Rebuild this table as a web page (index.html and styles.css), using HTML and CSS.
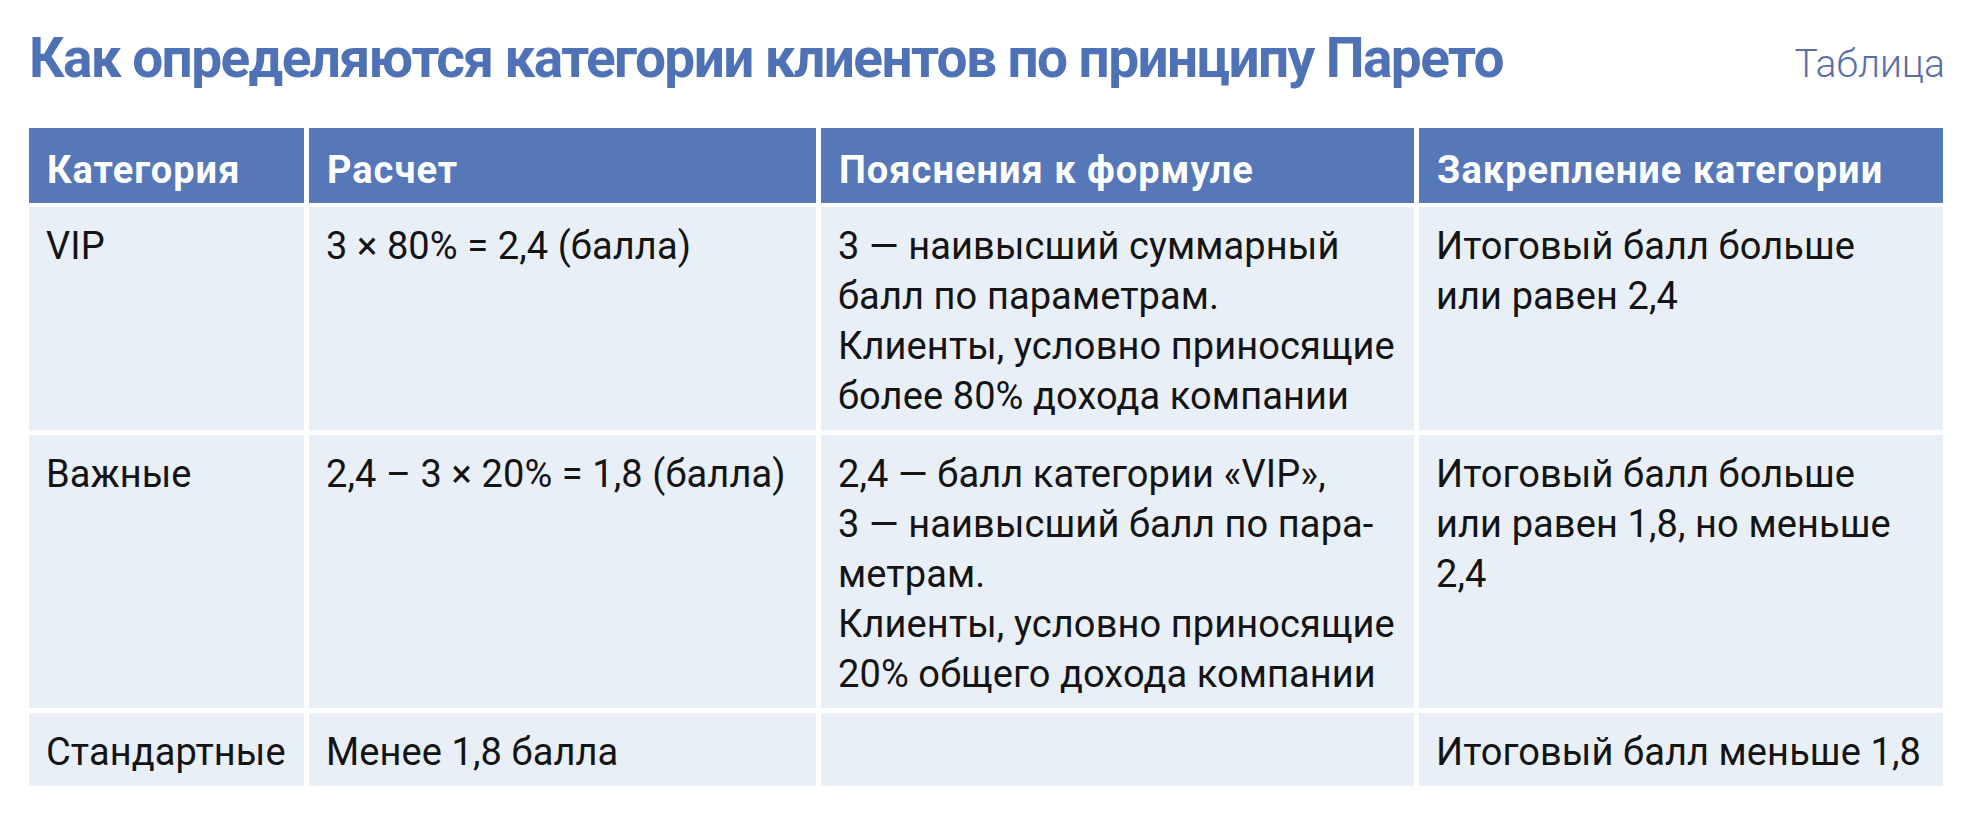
FILE: index.html
```html
<!DOCTYPE html>
<html lang="ru">
<head>
<meta charset="utf-8">
<title>Категории клиентов по принципу Парето</title>
<link rel="stylesheet" href="styles.css">
</head>
<body>
<div class="page">
  <header class="top">
    <h1 class="title">Как определяются категории клиентов по принципу Парето</h1>
    <span class="label">Таблица</span>
  </header>
  <div class="grid">
    <div class="th">Категория</div>
    <div class="th">Расчет</div>
    <div class="th">Пояснения к формуле</div>
    <div class="th">Закрепление категории</div>

    <div class="td">VIP</div>
    <div class="td">3 × 80% = 2,4 (балла)</div>
    <div class="td">3 — наивысший суммарный<br>балл по параметрам.<br>Клиенты, условно приносящие<br>более 80% дохода компании</div>
    <div class="td">Итоговый балл больше<br>или равен 2,4</div>

    <div class="td">Важные</div>
    <div class="td">2,4 – 3 × 20% = 1,8 (балла)</div>
    <div class="td">2,4 — балл категории «VIP»,<br>3 — наивысший балл по пара-<br>метрам.<br>Клиенты, условно приносящие<br>20% общего дохода компании</div>
    <div class="td">Итоговый балл больше<br>или равен 1,8, но меньше<br>2,4</div>

    <div class="td">Стандартные</div>
    <div class="td">Менее 1,8 балла</div>
    <div class="td"></div>
    <div class="td">Итоговый балл меньше 1,8</div>
  </div>
</div>
</body>
</html>
```
FILE: styles.css
```css
html, body {
  margin: 0;
  padding: 0;
  background: #ffffff;
}

.page {
  width: 1914px;
  padding: 0 0 0 29px;
  font-family: Roboto, "Noto Sans", "DejaVu Sans", sans-serif;
}

.top {
  display: flex;
  justify-content: space-between;
  align-items: baseline;
  padding-top: 26px;
  margin-bottom: 38px;
}

.title {
  margin: 0;
  font-size: 55px;
  line-height: 64px;
  font-weight: 700;
  letter-spacing: -1.6px;
  color: #4f72b6;
}

.label {
  font-size: 39px;
  font-weight: 300;
  color: #5a6ea6;
  margin-right: -2px;
}

.grid {
  display: grid;
  grid-template-columns: 275px 507px 593px 524px;
  column-gap: 5px;
  row-gap: 5px;
}

.th {
  background: #5677b8;
  color: #ffffff;
  font-weight: 700;
  font-size: 38px;
  line-height: 50px;
  letter-spacing: 1px;
  padding: 17px 10px 8px 18px;
  white-space: nowrap;
  margin-bottom: -1px;
}

.td {
  background: #e8eff7;
  color: #141414;
  font-size: 38px;
  line-height: 50px;
  letter-spacing: 0.1px;
  padding: 14px 10px 9px 17px;
  white-space: nowrap;
}
```
